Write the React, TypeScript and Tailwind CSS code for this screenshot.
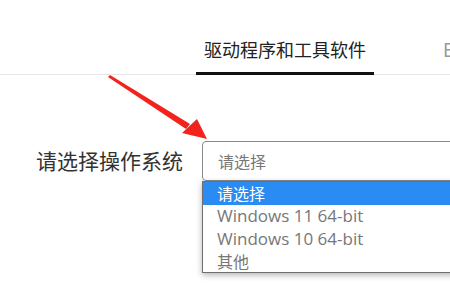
import React from "react";

const cjk = { fontFamily: '"Microsoft YaHei", "Noto Sans CJK SC", "Noto Sans", sans-serif' };
const latin = { fontFamily: '"Segoe UI", "Open Sans", "Noto Sans CJK SC", sans-serif' };

export default function App() {
  return (
    <div className="relative w-[450px] h-[300px] overflow-hidden bg-white" style={cjk}>
      <div className="flex h-[75px] border-b border-[#e6e6e6] pl-[196px]">
        <div className="shrink-0 w-[178px] h-[75px] border-b-[3px] border-[#111] flex justify-center pt-[36px] text-[18px] leading-[26px] text-[#222] whitespace-nowrap">
          驱动程序和工具软件
        </div>
        <div className="shrink-0 ml-[69px] pt-[36px] text-[18px] leading-[26px] text-[#999] whitespace-nowrap">EN</div>
      </div>

      <div className="flex items-start pt-[66px]">
        <div className="shrink-0 w-[202px] pr-[19px] h-[40px] flex items-center justify-end text-[21px] text-[#333] whitespace-nowrap">
          请选择操作系统
        </div>
        <div className="relative shrink-0">
          <div className="w-[300px] h-[40px] border border-[#8a8a8a] rounded-[4px] flex items-center pl-[15px] text-[16px] text-[#777]">
            请选择
          </div>
          <div className="absolute left-0 top-[40px] w-[300px] border border-[#6f6f6f] bg-white shadow-[0_2px_6px_rgba(0,0,0,0.3)] text-[16px] leading-[22.5px]">
            <div className="bg-[#2a8bf2] text-white pl-[14px] h-[23px]">请选择</div>
            <div className="text-[#777] pl-[14px] h-[22.5px] text-[17px]" style={latin}>Windows 11 64-bit</div>
            <div className="text-[#777] pl-[14px] h-[22.5px] text-[17px]" style={latin}>Windows 10 64-bit</div>
            <div className="text-[#777] pl-[14px] h-[22px]">其他</div>
          </div>
        </div>
      </div>

      <svg className="absolute left-0 top-0 pointer-events-none" width="450" height="300" viewBox="0 0 450 300">
        <polygon points="108,77 110,75 190,124 186,129" fill="#f2231c" />
        <polygon points="207,139 197,119 182,133" fill="#f2231c" />
      </svg>
    </div>
  );
}
